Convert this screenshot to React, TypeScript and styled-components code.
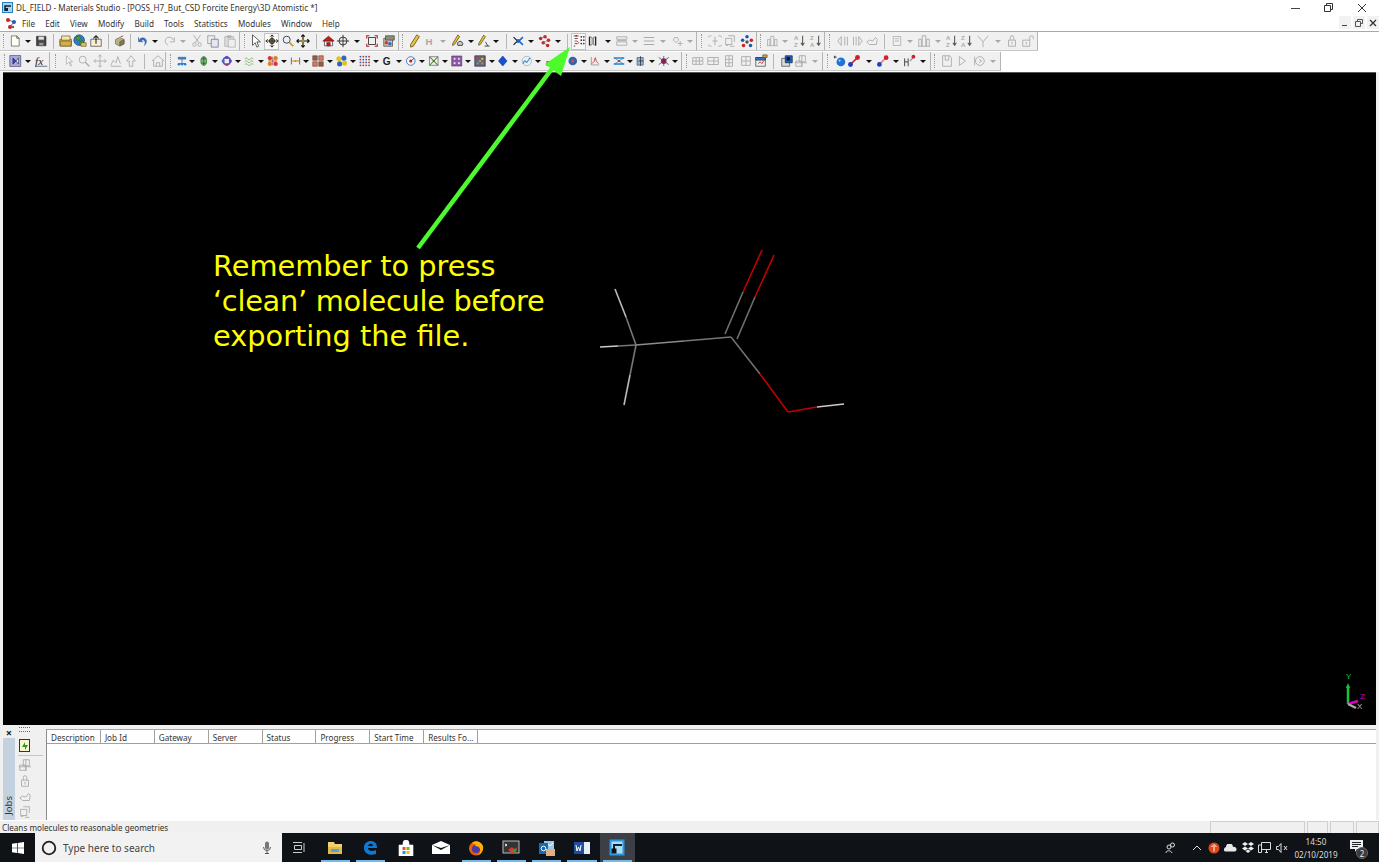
import React from "react";
import styled, { createGlobalStyle } from "styled-components";

const Global = createGlobalStyle`
  html, body { margin: 0; padding: 0; background: #f0f0f0; overflow: hidden; }
  #root { width: 1379px; height: 862px; }
  svg { display: block; }
`;
const UI = `"Noto Sans", "Open Sans", sans-serif`;

const Page = styled.div`
  position: relative; width: 1379px; height: 862px; display: flex; flex-direction: column;
  background: #f0f0f0; font-family: ${UI}; color: #222; overflow: hidden;
`;
const TitleBar = styled.div`
  height: 15px; flex: none; background: #fff; display: flex; align-items: center; padding-left: 2px; gap: 3px;
  font-size: 8.15px; white-space: nowrap; color: #333;
`;
const WinControls = styled.div`margin-left: auto; display: flex; padding-right: 1px;`;
const WinBtn = styled.div`width: 33px; height: 15px; display: flex; align-items: center; justify-content: center;`;
const MenuBar = styled.div`
  height: 16px; flex: none; background: #fff; display: flex; align-items: center; padding-left: 5px;
  font-size: 8.15px; color: #333; border-bottom: 1px solid #a9a9a9; box-sizing: content-box;
`;
const MenuLogo = styled.div`width: 14px; margin-right: 3px;`;
const MenuItem = styled.span`padding-right: 10.2px;`;
const MdiControls = styled.div`margin-left: auto; display: flex; gap: 2px; padding-right: 0; align-self: flex-start; margin-top: 1px;`;
const MdiBtn = styled.div`width: 12px; height: 13px; background: #f2f2f2; display: flex; align-items: center; justify-content: center;`;
const ToolRow = styled.div`height: 20px; flex: none; display: flex; background: #fff;`;
const Group = styled.div<{ $w: number }>`
  width: ${(p) => p.$w}px; flex: none; height: 19px; display: flex; align-items: center; background: #f0f0f0;
  border-right: 1px solid #b4b4b4; border-bottom: 1px solid #c8c8c8; box-sizing: border-box;
`;
const Slot = styled.div<{ $w: number; $active?: boolean }>`
  width: ${(p) => p.$w}px; flex: none; height: 17px; display: flex; align-items: center; justify-content: center;
  position: relative;
  ${(p) => (p.$active ? "&::before{content:'';position:absolute;top:0;bottom:0;left:50%;width:15px;margin-left:-8px;background:#f8f8f8;border:1px solid #c4c4c4;box-sizing:border-box;}" : "")}
  & > svg { position: relative; }
`;
const Grip = styled.div`width: 1px; height: 14px; border-left: 1px dotted #9a9a9a;`;
const Sep = styled.div`width: 1px; height: 15px; background: #b6b6b6;`;
const Caret = styled.div<{ $off?: boolean }>`
  width: 0; height: 0; border-left: 3px solid transparent; border-right: 3px solid transparent;
  border-top: 3px solid ${(p) => (p.$off ? "#a8a8a8" : "#111")};
`;
const Viewport = styled.div`
  position: relative; flex: none; height: 653px; margin: 0 3px; background: #000; border-top: 1px solid #555; box-sizing: border-box;
`;
const Scene = styled.svg`position: absolute; left: 0; top: 0;`;
const Note = styled.div`
  position: absolute; left: 210px; top: 176px; width: 380px; color: #ffff00;
  font: 28.8px/35px "DejaVu Sans", Verdana, sans-serif;
`;
const Tight = styled.span`letter-spacing: -0.28px;`;
const Pointer = styled.svg`position: absolute; left: 0; top: 0; pointer-events: none;`;
const JobsPanel = styled.div`flex: none; height: 95px; display: flex; padding: 0 3px 0 0;`;
const JobsTab = styled.div`width: 12px; flex: none; display: flex; flex-direction: column; align-items: center; margin-left: 3px;`;
const Close = styled.div`height: 13px; font-size: 11px; line-height: 15px; font-weight: 700; color: #222;`;
const TabBlue = styled.div`
  flex: 1; width: 12px; background: #c4d2e0; display: flex; align-items: flex-end; justify-content: center;
  font-size: 9.5px; color: #333;
`;
const TabLabel = styled.span`writing-mode: vertical-rl; transform: rotate(180deg); padding-top: 5px; line-height: 12px;`;
const JobTools = styled.div`width: 25px; margin-left: 3px; margin-right: 3px; flex: none; display: flex; flex-direction: column; align-items: flex-start; padding-top: 2px;`;
const JobGrip = styled.div`width: 11px; height: 3px; margin: 0 0 6px 1px; border-top: 1px dotted #667; border-bottom: 1px dotted #667;`;
const JobRule = styled.div`width: 25px; height: 1px; background: #c4c4c4; margin: 1px 0 2px;`;
const JobIcon = styled.div`height: 16px; display: flex; align-items: center;`;
const JobsTable = styled.div`flex: 1; margin-top: 4px; background: #fff; border-left: 1px solid #8c8c8c; border-top: 1px solid #a6a6a6; display: flex; flex-direction: column;`;
const HeadRow = styled.div`height: 14px; box-sizing: border-box; display: flex; border-bottom: 1px solid #a0a0a0; background: #fff; flex: none;`;
const HeadCell = styled.div`
  width: 53.9px; box-sizing: border-box; flex: none; border-right: 1px solid #a0a0a0; font-size: 8.15px; line-height: 15px;
  padding-left: 4px; color: #333; white-space: nowrap; overflow: hidden;
`;
const StatusBar = styled.div`flex: none; height: 13px; display: flex; font-size: 8.15px; line-height: 13px; padding-left: 2px; color: #333; border-top: 1px solid #fff; box-sizing: border-box;`;
const StatusText = styled.div`flex: 1; white-space: nowrap;`;
const StatusPane = styled.div<{ $w: number }>`width: ${(p) => p.$w}px; flex: none; margin-left: 2px; border: 1px solid #cfcfcf; border-bottom: 0; box-sizing: border-box;`;
const Taskbar = styled.div`flex: none; height: 29px; background: #0f1216; display: flex; align-items: stretch; color: #e8e8e8;`;
const Start = styled.div`width: 35px; flex: none; display: flex; align-items: center; justify-content: center;`;
const Search = styled.div`
  width: 247px; flex: none; background: #f2f2f2; display: flex; align-items: center; padding: 0 11px 0 6px; box-sizing: border-box;
  color: #444; font-size: 10px;
`;
const SearchText = styled.span`margin-left: 6px; flex: 1;`;
const TaskView = styled.div`width: 32px; flex: none; display: flex; align-items: center; justify-content: center;`;
const Apps = styled.div`display: flex; margin-left: 3.5px;`;
const AppTile = styled.div<{ $on?: boolean; $run?: boolean }>`
  width: 35.25px; flex: none; display: flex; align-items: center; justify-content: center; position: relative;
  background: ${(p) => (p.$on ? "#3c4046" : "transparent")};
  ${(p) => (p.$run ? "&::after{content:'';position:absolute;left:3px;right:3px;bottom:0;height:2px;background:#76b9ed;}" : "")}
`;
const Tray = styled.div`margin-left: auto; display: flex; align-items: center;`;
const TrayIcon = styled.div<{ $gap?: number }>`
  width: 17px; flex: none; display: flex; align-items: center; justify-content: center; margin-right: ${(p) => p.$gap ?? 0}px;
`;
const Clock = styled.div`width: 52px; text-align: center; font-size: 8.15px; line-height: 13px; color: #ddd;`;
const Notify = styled.div`width: 37px; align-self: stretch; box-sizing: border-box; padding: 0 9px 3px 0; position: relative; display: flex; justify-content: center; align-items: center;`;
const Badge = styled.div`
  position: absolute; left: 14px; top: 14px; width: 12px; height: 12px; border-radius: 50%; background: #3a3a3a; color: #eee;
  font-size: 8px; line-height: 11px; text-align: center; border: 1px solid #666; box-sizing: border-box;
`;

const G = "#a9a9a9";
const D = "#333";
const ln = (d: string, c = G, w = 1) => <path d={d} fill="none" stroke={c} strokeWidth={w} />;
const fl = (d: string, c: string, s = D) => <path d={d} fill={c} stroke={s} strokeWidth={0.8} />;
const dot = (x: number, y: number, c: string, r = 2) => <circle cx={x} cy={y} r={r} fill={c} />;
const txt = (x: number, y: number, s: string, c = G, size = 8) => (
  <text x={x} y={y} fontSize={size} fill={c} fontFamily="Liberation Sans, sans-serif" fontWeight={600}>{s}</text>
);

const ICONS: Record<string, React.ReactNode> = {
  new: <>{fl("M3 1.5h7l3 3v10H3z", "#fffff2", "#444")}{ln("M10 1.5v3h3", "#444")}</>,
  save: <>{fl("M2 2h12v12H2z", "#444", "#222")}{fl("M4.500 2.500h7v4h-7z", "#e8e8e8", "#888")}{fl("M5 10h6v4H5z", "#999", "#555")}</>,
  open: <>{fl("M1 6h14v8H1z", "#e6c66a", "#6b5a20")}{fl("M3 2h10v5H3z", "#f6e7a8", "#6b5a20")}{fl("M1 8h14l-1 6H2z", "#d4ad44", "#6b5a20")}</>,
  globe: <><circle cx="7" cy="7" r="6" fill="#2f7fc4" stroke="#1d4f80" />{fl("M3 4l4-2 2 3-3 3z", "#4d9a3a", "#2f6a24")}{fl("M8 8l4 0-1 4-3 0z", "#4d9a3a", "#2f6a24")}{fl("M9 10h6v4H9z", "#e3c45e", "#6b5a20")}</>,
  imp: <>{fl("M2 6h12v8H2z", "#f5efcf", "#444")}{ln("M8 11V2M5 5l3-3 3 3", "#222", 1.2)}</>,
  box: <>{fl("M2 6l6-3 6 3v6l-6 3-6-3z", "#b7b47e", "#555")}{fl("M8 9l6-3v6l-6 3z", "#7d7b4e", "#555")}{ln("M9 2l4-1", "#c33", 1.2)}</>,
  undo: <><path d="M3 7a5 5 0 0 1 9-1c1 2 1 5-2 8 1-3 1-5 0-6-1-2-3-2-4-1l2 2H2V3z" fill="#2f6fc2" stroke="#1c4a86" strokeWidth=".5" /></>,
  redo: <>{ln("M13 7a5 5 0 0 0-9-1c-1 2 0 5 3 7M9 9h5V4")}</>,
  cut: <>{ln("M4 1l6 9M12 1L6 10")}<circle cx="5" cy="12" r="2" fill="none" stroke={G} /><circle cx="11" cy="12" r="2" fill="none" stroke={G} /></>,
  copy: <>{fl("M2 2h8v9H2z", "#eee", "#888")}{fl("M6 6h8v9H6z", "#e4e8f2", "#667")}</>,
  paste: <>{fl("M2 3h10v11H2z", "#ddd", G)}{fl("M6 6h8v9H6z", "#eee", G)}{ln("M5 2h4v2H5z")}</>,
  cursor: <>{fl("M4 1v12l3-3 2 5 2-1-2-5h4z", "#fff", "#222")}</>,
  cursorD: <>{fl("M5 2v10l3-3 2 5 1-1-2-4h3z", "#f4f4f4", G)}</>,
  rotate: <><circle cx="8" cy="8" r="3" fill="#b08a2a" stroke="#222" />{ln("M8 1v14M1 8h14", "#222")}{ln("M6 3l2-2 2 2M6 13l2 2 2-2M3 6L1 8l2 2M13 6l2 2-2 2", "#222")}</>,
  zoom: <><circle cx="6.500" cy="6.500" r="4" fill="#eef" stroke="#333" />{ln("M9.500 9.500l4.500 4.500", "#c49a2a", 2)}</>,
  zoomD: <><circle cx="6.500" cy="6.500" r="4" fill="none" stroke={G} />{ln("M9.500 9.500l4.500 4.500", G, 1.5)}</>,
  pan: <>{ln("M8 1v14M1 8h14M6 3l2-2 2 2M6 13l2 2 2-2M3 6L1 8l2 2M13 6l2 2-2 2", "#111", 1.3)}{dot(8, 8, "#b08a2a", 2)}</>,
  panD: <>{ln("M8 1v14M1 8h14M6 3l2-2 2 2M6 13l2 2 2-2M3 6L1 8l2 2M13 6l2 2-2 2")}</>,
  home: <>{fl("M3 8h10v6H3z", "#eee", "#333")}{fl("M1 8l7-6 7 6z", "#b81f1f", "#7a1010")}{fl("M6 10h4v4H6z", "#b81f1f", "#7a1010")}</>,
  homeD: <>{ln("M1 8l7-6 7 6M3 7v7h10V7M6 14v-4h4v4")}</>,
  center: <><circle cx="8" cy="8" r="4.500" fill="none" stroke="#222" />{ln("M8 1v14M1 8h14", "#222")}</>,
  fit: <>{ln("M2 5V2h3M11 2h3v3M14 11v3h-3M5 14H2v-3", "#b02020", 1.3)}{ln("M4 4h8v8H4z", "#333")}</>,
  display: <>{fl("M2 5h10v9H2z", "#c9c6b2", "#444")}{fl("M4 2h10v5H4z", "#8f8c78", "#444")}{dot(5, 10, "#d33")}{dot(9, 11, "#36c")}</>,
  pencil: <>{fl("M10 1l3 2-7 11-3 1 0-3z", "#e9c33a", "#4a3a10")}</>,
  H: <>{txt(4, 12, "H", G, 11)}</>,
  pen2: <>{fl("M9 1l2 2-6 9-2 1 0-2z", "#e9c33a", "#4a3a10")}<path d="M9 13a3 3 0 1 1 5 0z" fill="#ccc" stroke="#333" /></>,
  pen3: <>{fl("M8 1l2 2-6 9-2 1 0-2z", "#e9c33a", "#4a3a10")}{ln("M9 14h6M10 9l3 5", "#333")}</>,
  cross: <>{ln("M2 3l5 5-5 5", "#222", 1.5)}{ln("M14 3L9 8l5 5", "#1c63c7", 2)}{dot(8, 8, "#1c63c7", 2.5)}</>,
  reddots: <>{dot(3, 5, "#c22")}{dot(8, 3, "#c22")}{dot(12, 7, "#c22")}{dot(6, 10, "#c22")}{dot(11, 13, "#c22")}{ln("M3 5l5-2 4 4-6 3 5 3", "#666", .7)}</>,
  clean: <>{ln("M2 2h6M3 5h4M2 14h2M3 11h3", "#444")}{dot(11, 3, "#333", 1)}{dot(14, 3, "#333", 1)}{dot(11, 7, "#333", 1)}{dot(14, 7, "#333", 1)}{dot(11, 11, "#333", 1)}{dot(14, 11, "#333", 1)}{ln("M3 8l3 0 2 2-2 2", "#c22")}{dot(5, 2, "#c22", 1)}</>,
  bond: <>{ln("M4 3v10M11 3v10", "#222", 1.5)}{ln("M4 3l3 1v8l-3 1M11 3L8.500 4v8l2.500 1", "#555", .8)}</>,
  dis1: <>{ln("M2 3h12v3H2zM2 9h12v4H2zM2 7.500h12")}</>,
  dis2: <>{ln("M2 4h12M2 8h12M2 12h12", G, 1.4)}</>,
  dis3: <>{ln("M5 4h4l1 3-3 3-3-3z")}{ln("M12 8v6M9 11h6")}</>,
  tor1: <>{ln("M4 2a6 6 0 0 0 0 12M12 2a6 6 0 0 1 0 12M8 3v10M5 8h6")}</>,
  tor2: <>{ln("M3 5h7v7H3zM6 2h7v7M3 13h3M8 14h5")}</>,
  tor3: <>{dot(8, 3, "#1f55b0")}{dot(3, 7, "#1f55b0")}{dot(13, 7, "#c22")}{dot(4, 13, "#c22")}{dot(12, 13, "#1f55b0")}{dot(8, 9, "#555")}</>,
  colsD: <>{ln("M2 14V6h3v8M6 14V2h4v12M11 14V6h3v8M1 14h14")}</>,
  az: <>{txt(1, 7, "A", G, 7)}{txt(1, 15, "Z", G, 7)}{ln("M11 2v11M9 10l2 3 2-3", "#555", 1.2)}</>,
  za: <>{txt(1, 7, "Z", G, 7)}{txt(1, 15, "A", G, 7)}{ln("M11 2v11M9 10l2 3 2-3", "#555", 1.2)}</>,
  tril: <>{ln("M6 3L2 8l4 5zM10 3v10M13 3v10")}</>,
  trir: <>{ln("M10 3l4 5-4 5zM7 3v10M4 3v10")}</>,
  hand: <>{ln("M2 9l3-2 4 1 3-4 2 2-1 6H5z")}</>,
  sheet: <>{ln("M3 2h10v12H3zM5 5h6M5 8h6")}</>,
  fork: <>{ln("M2 2l6 7 6-7M8 9v6")}</>,
  lock: <>{ln("M4 7h8v7H4zM6 7V4a2 2 0 0 1 4 0v3M8 9v3")}</>,
  unlock: <>{ln("M2 7h8v7H2zM10 7V4a2 2 0 0 1 4 0v2M6 9v3")}</>,
  film: <>{fl("M1 1h14v14H1z", "#a8abe0", "#445")}{fl("M5 4l4 4-4 4z", "#3f3fd0", "#224")}{fl("M12 4L9 8l3 4z", "#fff", "#224")}</>,
  fx: <><text x="0" y="12" fontSize="13" fill="#222" fontStyle="italic" fontFamily="Liberation Serif, serif">fx</text>{ln("M1 14h13", "#222", .7)}</>,
  graph: <>{ln("M2 13l3-6 3 3 2-7 3 8", G)}{ln("M2 14h12")}</>,
  ball: <>{ln("M8 2L3 8h3v6h4V8h3z")}</>,
  t1: <>{fl("M2 2h12v3H2z", "#3a8ad0", "#1a4a88")}{ln("M8 5v6M3 12h10", "#2a66b8", 1.3)}{dot(3, 13, "#2a7ad0", 2)}{dot(8, 13, "#2a7ad0", 2)}{dot(13, 13, "#2a7ad0", 2)}</>,
  t2: <><ellipse cx="8" cy="8" rx="4" ry="6" fill="#7cc06a" stroke="#2a6a20" />{ln("M8 2v12M5 5h6M5 11h6", "#245")}</>,
  t3: <><circle cx="8" cy="8" r="5" fill="none" stroke="#5a49c0" strokeWidth="2.500" />{dot(8, 3, "#5a49c0", 2.2)}{dot(3, 8, "#3a70c4", 2.2)}{dot(13, 8, "#5a49c0", 2.2)}{dot(8, 13, "#c33", 2)}</>,
  t4: <>{ln("M1 5q2-3 4 0t4 0 4 0M1 9q2-3 4 0t4 0 4 0M1 13q2-3 4 0t4 0 4 0", "#6cb35a", 1.1)}</>,
  t5: <>{dot(4, 4, "#d33", 3)}{dot(12, 4, "#d8851a", 3)}{dot(4, 12, "#d8851a", 3)}{dot(12, 12, "#d33", 3)}{ln("M8 2v12M2 8h12", "#a33", 1)}</>,
  t6: <>{ln("M3 8h10", "#d8851a", 1.5)}{ln("M2 3v10M14 3v10", "#2a66b8", 1.3)}{dot(8, 8, "#d8851a", 1.5)}</>,
  t7: <>{fl("M1 1h6v6H1z", "#9c5a48", "#643")}{fl("M9 9h6v6H9z", "#9c5a48", "#643")}{fl("M9 1h6v6H9z", "#d77a60", "#643")}{fl("M1 9h6v6H1z", "#d77a60", "#643")}</>,
  t8: <>{dot(4, 5, "#e5c21a", 3.5)}{dot(11, 4, "#2a66c8", 3.5)}{dot(5, 12, "#2a66c8", 3.5)}{dot(12, 11, "#e5c21a", 3.5)}</>,
  t9: <>{[2, 6, 10, 14].flatMap((x) => [2, 6, 10, 14].map((y) => <circle key={x + "-" + y} cx={x} cy={y} r="1.300" fill={(x + y) % 8 === 0 ? "#c33" : "#2a66b8"} />))}</>,
  G: <>{txt(1, 13, "G", "#222", 14)}</>,
  t11: <><circle cx="8" cy="8" r="6" fill="#f4f4f4" stroke="#3a70c4" strokeWidth="1.200" />{dot(8, 8, "#c22", 2.2)}{ln("M8 8l5-4", "#333")}</>,
  t12: <>{ln("M2 2h12v12H2z", "#666")}{ln("M2 2l12 12M14 2L2 14", "#3a9a3a", 1.4)}{dot(8, 8, "#c33", 1.5)}</>,
  t13: <>{fl("M1 1h14v14H1z", "#8a5aa8", "#534")}{dot(5, 5, "#e8d8f0", 1.5)}{dot(11, 5, "#e8d8f0", 1.5)}{dot(5, 11, "#e8d8f0", 1.5)}{dot(11, 11, "#e8d8f0", 1.5)}</>,
  t14: <>{fl("M1 1h14v14H1z", "#667", "#223")}{dot(5, 4, "#d33", 1.5)}{dot(11, 5, "#ec4", 1.5)}{dot(5, 11, "#4ac", 1.5)}{dot(11, 11, "#d6a", 1.5)}{dot(8, 8, "#8c4", 1.5)}</>,
  t15: <>{fl("M8 1l6 7-6 7-6-7z", "#1b4fd0", "#123a9a")}</>,
  t16: <><circle cx="8" cy="8" r="6.500" fill="none" stroke="#7bb4dc" />{ln("M3 12c2-8 4-2 5-2s3-6 5-6", "#3a8ac4", 1.5)}</>,
  t17: <>{dot(5, 12, "#c22", 2.5)}{dot(11, 12, "#c22", 2.5)}{ln("M3 9h10", "#b03a20", 1.5)}</>,
  t18: <><circle cx="8" cy="8" r="6" fill="#2f67ac" />{dot(8, 8, "#e44", 2)}</>,
  t19: <>{ln("M2 2v12h12", "#777")}{ln("M3 12l3-3 2-6 2 6 3 3", "#c22", 1.2)}</>,
  t20: <>{ln("M1 4h14M1 12h14", "#1c84c9", 1.8)}{ln("M2 4l12 8M14 4L2 12", "#1c84c9", 1)}{dot(8, 8, "#c22", 1.5)}</>,
  t21: <>{fl("M3 3h9v11H3z", "#8fb8e0", "#234")}{ln("M8 1v14M5 8h7", "#222")}</>,
  t22: <>{dot(8, 8, "#c2203a", 4)}{ln("M1 3l14 10M15 3L1 13M8 1v14", "#223a80", 1)}</>,
  grid: <>{ln("M2 4h12v8H2zM2 8h12M6 4v8M10 4v8")}</>,
  grid2: <>{ln("M2 4h12v8H2zM2 8h12M9 4v8")}</>,
  grid3: <>{ln("M4 2h8v12H4zM4 6h8M4 10h8M8 2v12")}</>,
  grid4: <>{ln("M3 3h10v10H3zM8 3v10M3 8h10")}</>,
  tbl: <>{fl("M2 4h11v10H2z", "#eee", "#444")}{fl("M2 4h11v3H2z", "#3a70c4", "#234")}{ln("M5 11l2-2 2 2 2-3", "#c22")}{fl("M10 1h5v3h-5z", "#c9a53a", "#654")}</>,
  sel: <>{fl("M2 5h9v9H2z", "#ddd", "#444")}{fl("M6 2h8v8H6z", "#1c63c7", "#123")}{fl("M8 4h3v3H8z", "#111", "#111")}</>,
  sel2: <>{ln("M6 2h7v7H6zM2 8h7v6H2zM9 1v14M1 10h14")}</>,
  ato: <>{ln("M2 2v3M1 3.500h3", "#222")}<circle cx="9" cy="9" r="5" fill="#1c74d8" />{dot(7.500, 7.500, "#9cd0ff", 1.3)}</>,
  bnd: <>{ln("M4 12l8-8", "#c22", 2)}{dot(4, 12, "#1c3ec7", 2.8)}{dot(12, 4, "#d21f2a", 2.8)}</>,
  bnd2: <>{ln("M4 12l8-8", "#d88", 2)}{dot(4, 12, "#1c3ec7", 2.8)}{dot(12, 4, "#d21f2a", 2.8)}</>,
  bnd3: <>{ln("M3 5v9M7 5v9M3 9h4", "#444", 1.1)}{ln("M9 8l4-4", "#999", 1.5)}{dot(13, 3, "#d21f2a", 2.2)}</>,
  ana1: <>{ln("M3 2h8l2 2v10H3zM6 2v5h4V2")}</>,
  play: <>{ln("M5 3l7 5-7 5z")}</>,
  stop: <>{ln("M3 3v10")}<circle cx="9" cy="8" r="5" fill="none" stroke={G} />{ln("M8 6l3 2-3 2")}</>,
  homeSpare: null,
};

type Item = [string, number];
type Grp = { s: number; e: number; items: Item[] };

const a = "arrow";
const o = "arrowD";
const row1: Grp[] = [
  { s: 0, e: 240, items: [["grip", 3], ["new", 14], [a, 28], ["save", 42], ["sep", 53], ["open", 64], ["globe", 80], ["imp", 97], ["sep", 108], ["box", 119], ["sep", 131], ["undo", 142], [a, 155], ["redo", 169], [o, 183], ["cut", 196], ["copy", 213], ["paste", 229]] },
  { s: 240, e: 399, items: [["grip", 243], ["cursor", 255], ["*rotate", 272], ["zoom", 288], ["pan", 304], ["sep", 317], ["home", 327], ["center", 343], [a, 357], ["fit", 371], ["display", 387]] },
  { s: 399, e: 697, items: [["grip", 402], ["pencil", 413], ["H", 430], [o, 443], ["pen2", 457], [a, 471], ["pen3", 483], [a, 498], ["sep", 506], ["cross", 517], [a, 531], ["reddots", 545], [a, 559], ["sep", 567], ["*clean", 577], ["bond", 594], [a, 608], ["dis1", 621], [o, 635], ["dis2", 649], [o, 663], ["dis3", 676], [o, 690]] },
  { s: 697, e: 757, items: [["grip", 701], ["tor1", 714], ["tor2", 730], ["tor3", 745]] },
  { s: 757, e: 825, items: [["grip", 760], ["colsD", 771], [o, 785], ["az", 799], ["za", 815]] },
  { s: 825, e: 1038, items: [["grip", 829], ["tril", 842], ["trir", 857], ["hand", 873], ["sep", 885], ["sheet", 896], [o, 909], ["colsD", 925], [o, 938], ["az", 951], ["za", 967], ["fork", 983], [o, 998], ["lock", 1011], ["unlock", 1027]] },
];
const row2: Grp[] = [
  { s: 0, e: 50, items: [["grip", 3], ["film", 15], [a, 28], ["fx", 42]] },
  { s: 50, e: 166, items: [["grip", 56], ["cursorD", 68], ["zoomD", 84], ["panD", 100], ["graph", 116], ["ball", 132], ["sep", 145], ["homeD", 156]] },
  { s: 166, e: 682, items: [["grip", 171], ["t1", 182], [a, 191], ["t2", 204], [a, 214], ["t3", 227], [a, 237], ["t4", 250], [a, 260], ["t5", 273], [a, 283], ["t6", 296], [a, 305], ["t7", 319], [a, 329], ["t8", 342], [a, 352], ["t9", 365], [a, 375], ["G", 388], [a, 398], ["t11", 412], [a, 421], ["t12", 435], [a, 444], ["t13", 458], [a, 467], ["t14", 481], [a, 491], ["t15", 503], [a, 514], ["t16", 527], [a, 537], ["t17", 550], [a, 561], ["t18", 573], [a, 584], ["t19", 596], [a, 605], ["t20", 620], [a, 629], ["t21", 641], [a, 651], ["t22", 664], [a, 674]] },
  { s: 682, e: 823, items: [["grip", 686], ["grid", 696], ["grid2", 713], ["grid3", 729], ["grid4", 746], ["tbl", 762], ["sep", 774], ["sel", 785], ["sel2", 802], [o, 815]] },
  { s: 823, e: 931, items: [["grip", 827], ["ato", 838], ["bnd", 855], [a, 869], ["bnd2", 882], [a, 896], ["bnd3", 908], [a, 924]] },
  { s: 931, e: 1001, items: [["grip", 934], ["ana1", 945], ["play", 962], ["stop", 980], [o, 993]] },
];

const Glyph = ({ k, size = 14 }: { k: string; size?: number }) => (
  <svg width={size} height={size} viewBox="0 0 16 16">{ICONS[k]}</svg>
);

const ToolGroup = ({ g }: { g: Grp }) => (
  <Group $w={g.e - g.s}>
    {g.items.map(([k, c], i) => {
      const left = i === 0 ? g.s : (g.items[i - 1][1] + c) / 2;
      const right = i === g.items.length - 1 ? g.e - 1 : (c + g.items[i + 1][1]) / 2;
      const w = right - left;
      const active = k.startsWith("*");
      const name = active ? k.slice(1) : k;
      return (
        <Slot key={i} $w={w} $active={active}>
          {name === "grip" ? <Grip /> : name === "sep" ? <Sep /> : name === a ? <Caret /> : name === o ? <Caret $off /> : <Glyph k={name} />}
        </Slot>
      );
    })}
  </Group>
);

const bonds: [number, number, number, number, string][] = [
  [636, 345, 626, 317, "#777"], [626, 317, 615, 289, "#bbb"],
  [636, 345, 618, 346, "#777"], [618, 346, 600, 347, "#ccc"],
  [636, 345, 630, 375, "#777"], [630, 375, 624, 405, "#bbb"],
  [636, 345, 684, 341, "#8c8c8c"], [684, 341, 731, 337, "#777"],
  [725, 334, 743, 292, "#707070"], [743, 292, 762, 250, "#c00000"],
  [737, 339, 755, 297, "#707070"], [755, 297, 774, 255, "#c00000"],
  [731, 337, 760, 374, "#707070"], [760, 374, 788, 412, "#c00000"],
  [788, 412, 817, 407, "#c00000"], [817, 407, 844, 404, "#ccc"],
];

const Molecule = () => (
  <Scene width="1373" height="652" viewBox="3 73 1373 652">
    {bonds.map(([x1, y1, x2, y2, c], i) => (
      <line key={i} x1={x1} y1={y1} x2={x2} y2={y2} stroke={c} strokeWidth="1.600" />
    ))}
    <path d="M1348 704V686" stroke="#16c43a" strokeWidth="2.500" />
    <path d="M1346 688l2-5 2 5z" fill="#16c43a" />
    <path d="M1348 704l10-3" stroke="#e000c8" strokeWidth="2.500" />
    <path d="M1348 704l8 4" stroke="#aaa" strokeWidth="2.500" />
    <text x="1346" y="679" fontSize="8" fill="#16c43a" fontFamily="Liberation Sans">Y</text>
    <text x="1360" y="699" fontSize="8" fill="#d000c0" fontFamily="Liberation Sans">Z</text>
    <text x="1357" y="709" fontSize="8" fill="#bbb" fontFamily="Liberation Sans">X</text>
  </Scene>
);

const cols = ["Description", "Job Id", "Gateway", "Server", "Status", "Progress", "Start Time", "Results Fo..."];

const WinLogo = () => (
  <svg width="12" height="12" viewBox="0 0 12 12"><path d="M0 1.700l5-.7v4.700H0zM5.700.9L12 0v5.700H5.700zM0 6.300h5V11l-5-.7zM5.700 6.300H12V12l-6.300-.9z" fill="#fff" /></svg>
);
const TI = ({ w = 16, h = 16, children }: { w?: number; h?: number; children: React.ReactNode }) => (
  <svg width={w} height={h} viewBox={`0 0 ${w} ${h}`}>{children}</svg>
);

export default function App() {
  return (
    <Page>
      <Global />
      <TitleBar>
        <svg width="11" height="11" viewBox="0 0 11 11"><rect width="11" height="11" fill="#2a7fc0" /><rect x="1" y="1" width="9" height="9" fill="#a8d4f0" /><path d="M3 9V4h6" fill="none" stroke="#123" strokeWidth="1.500" /><rect x="3" y="6" width="3" height="3" fill="#123" /></svg>
        <span>DL_FIELD - Materials Studio - [POSS_H7_But_CSD Forcite Energy\3D Atomistic *]</span>
        <WinControls>
          <WinBtn><svg width="10" height="10"><path d="M0 5.500h9" stroke="#444" /></svg></WinBtn>
          <WinBtn><svg width="10" height="10"><path d="M2.500 2.500v-2h6v6h-2M.5 2.500h6v6h-6z" fill="none" stroke="#333" /></svg></WinBtn>
          <WinBtn><svg width="10" height="10"><path d="M1 1l8 8M9 1l-8 8" stroke="#333" /></svg></WinBtn>
        </WinControls>
      </TitleBar>
      <MenuBar>
        <MenuLogo>
          <svg width="12" height="12" viewBox="0 0 12 12"><path d="M3 3l6 2-4 5" stroke="#666" fill="none" />{dot(3, 3, "#c22", 2)}{dot(9, 5, "#2a55c0", 2)}{dot(5, 10, "#c22", 2)}{dot(8, 10, "#666", 1.2)}</svg>
        </MenuLogo>
        {["File", "Edit", "View", "Modify", "Build", "Tools", "Statistics", "Modules", "Window", "Help"].map((m) => <MenuItem key={m}>{m}</MenuItem>)}
        <MdiControls>
          <MdiBtn><svg width="8" height="8"><path d="M1 6.500h5" stroke="#444" /></svg></MdiBtn>
          <MdiBtn><svg width="8" height="8"><path d="M2.500 2V.5h5v4H6M.5 2.500h5v5h-5z" fill="none" stroke="#555" /></svg></MdiBtn>
          <MdiBtn><svg width="8" height="8"><path d="M1 1l6 6M7 1L1 7" stroke="#333" strokeWidth="1.300" /></svg></MdiBtn>
        </MdiControls>
      </MenuBar>
      <ToolRow>{row1.map((g) => <ToolGroup key={g.s} g={g} />)}</ToolRow>
      <ToolRow>{row2.map((g) => <ToolGroup key={g.s} g={g} />)}</ToolRow>
      <Viewport>
        <Molecule />
        <Note>Remember to press<br /><Tight>‘clean’ molecule before</Tight><br />exporting the file.</Note>
      </Viewport>
      <JobsPanel>
        <JobsTab>
          <Close>×</Close>
          <TabBlue><TabLabel>Jobs</TabLabel></TabBlue>
        </JobsTab>
        <JobTools>
          <JobGrip />
          <JobIcon><svg width="14" height="15" viewBox="0 0 14 15"><rect x="1.500" y="1.500" width="10" height="12" fill="#fbf6cf" stroke="#333" /><path d="M4 9l3-5v3h3l-3 5V9z" fill="#2a9a2a" /></svg></JobIcon>
          <JobRule />
          <JobIcon><Glyph k="sel2" /></JobIcon>
          <JobIcon><Glyph k="lock" /></JobIcon>
          <JobIcon><Glyph k="hand" /></JobIcon>
          <JobIcon><Glyph k="tor2" /></JobIcon>
        </JobTools>
        <JobsTable>
          <HeadRow>{cols.map((c) => <HeadCell key={c}>{c}</HeadCell>)}</HeadRow>
        </JobsTable>
      </JobsPanel>
      <StatusBar>
        <StatusText>Cleans molecules to reasonable geometries</StatusText>
        <StatusPane $w={95} /><StatusPane $w={21} /><StatusPane $w={24} /><StatusPane $w={23} />
      </StatusBar>
      <Taskbar>
        <Start><WinLogo /></Start>
        <Search>
          <svg width="16" height="16"><circle cx="8" cy="8" r="6.300" fill="none" stroke="#222" strokeWidth="1.800" /></svg>
          <SearchText>Type here to search</SearchText>
          <svg width="8" height="13" viewBox="0 0 8 13"><rect x="2" y="0.500" width="4" height="8" rx="2" fill="#777" /><path d="M.5 6a3.500 3.500 0 0 0 7 0M4 10v2M2 12.500h4" stroke="#555" fill="none" /></svg>
        </Search>
        <TaskView><svg width="13" height="11"><path d="M1 .5h9M2.500 3.500h7v4h-7zM1 10.500h9M12 1v9" stroke="#ccc" fill="none" /></svg></TaskView>
        <Apps>
          <AppTile $run><TI h={14}><path d="M1 1h6l1 2h7v10H1z" fill="#f5cf6a" /><path d="M1 6h14v7H1z" fill="#e5b648" /><rect x="4" y="8" width="8" height="3" fill="#4aa6e0" /></TI></AppTile>
          <AppTile $run><TI><path d="M2 8c0-5 3-7 7-7 4 0 6 3 6 7H6c0 3 4 4 8 2v4c-6 2-12 0-12-6zM6 6h5c0-3-4-3-5 0z" fill="#0f78d4" /></TI></AppTile>
          <AppTile><TI><path d="M1 5h14v11H1zM5 5V3a3 3 0 0 1 6 0v2" fill="#fff" stroke="#fff" strokeWidth=".6" /><rect x="4.500" y="7" width="3" height="3" fill="#f25022" /><rect x="8.500" y="7" width="3" height="3" fill="#7fba00" /><rect x="4.500" y="11" width="3" height="3" fill="#00a4ef" /><rect x="8.500" y="11" width="3" height="3" fill="#ffb900" /></TI></AppTile>
          <AppTile><TI w={18} h={13}><path d="M0 4l9-4 9 4v9H0z" fill="#fff" /><path d="M0 4l9 5 9-5-9 3z" fill="#111" /></TI></AppTile>
          <AppTile $run><TI><circle cx="8" cy="8.500" r="7" fill="#e66000" /><circle cx="8" cy="9" r="4" fill="#4a3aa8" /><path d="M4 3c3-3 9-2 11 3 1 4-2 9-6 9 3-1 4-4 3-6-1-3-4-3-5-3 0-1 1-1 1-2-2 0-3 0-4-1z" fill="#ffb000" /></TI></AppTile>
          <AppTile $run><TI w={18} h={16}><rect x="1" y="1" width="16" height="12" fill="#333" stroke="#bbb" /><path d="M3 4l2 1-2 1" stroke="#fff" fill="none" /><path d="M6 10l4-3 3 3 3-4-3 7-2 1z" fill="#d33" /><path d="M10 11l3-3 2 2-3 3z" fill="#3a9a3a" /></TI></AppTile>
          <AppTile $run><TI w={18}><rect x="6" y="1" width="10" height="9" fill="#9cc8ec" /><rect x="1" y="3" width="9" height="11" fill="#0f6cbd" /><circle cx="5.500" cy="8.500" r="2.300" fill="none" stroke="#fff" /><path d="M8 9h9v7H8z" fill="#e0b080" /><path d="M10 4l2 2 3-3" stroke="#fff" fill="none" /></TI></AppTile>
          <AppTile $run><TI w={18}><rect x="7" y="2" width="10" height="12" fill="#e8edf7" /><rect x="1" y="2" width="10" height="12" fill="#1f4f9c" /><path d="M3 5l1 6 1.500-4 1.500 4 1-6" stroke="#fff" fill="none" /></TI></AppTile>
          <AppTile $on $run><TI h={17}><rect x="0.500" y="0.500" width="15" height="16" fill="#2a95e0" /><rect x="2.500" y="2.500" width="11" height="12" fill="#a8dcf8" /><path d="M5 14V6h8" fill="none" stroke="#123" strokeWidth="2" /><rect x="2.500" y="9.500" width="5" height="5" fill="#111" /></TI></AppTile>
        </Apps>
        <Tray>
          <TrayIcon $gap={9}><TI w={12} h={12}><circle cx="7.500" cy="3" r="2" fill="none" stroke="#ddd" /><circle cx="4" cy="5" r="2" fill="none" stroke="#ddd" /><path d="M1 11c0-3 5-3 6 0" fill="none" stroke="#ddd" /></TI></TrayIcon>
          <TrayIcon><TI w={10} h={6}><path d="M1 5l4-4 4 4" fill="none" stroke="#ddd" /></TI></TrayIcon>
          <TrayIcon><TI w={12} h={12}><circle cx="6" cy="6" r="5.500" fill="#e0471a" /><path d="M6 9.500V4M3.500 5L6 2.500 8.500 5" stroke="#fff" fill="none" /></TI></TrayIcon>
          <TrayIcon><TI w={13} h={8}><path d="M1 7.500a2.500 2.500 0 0 1 1-4.500 3.500 3.500 0 0 1 7 0 2.300 2.300 0 0 1 2 4.500z" fill="#e8e8e8" /></TI></TrayIcon>
          <TrayIcon><TI w={12} h={11}><path d="M3 0l3 2-3 2-3-2zM9 0l3 2-3 2-3-2zM3 4.500l3 2-3 2-3-2zM9 4.500l3 2-3 2-3-2zM3.500 9l2.500-1.500L8.500 9 6 11z" fill="#eee" /></TI></TrayIcon>
          <TrayIcon><TI w={13} h={11}><path d="M3.500.5h9v7h-9zM.5 3h3v7.500h-3zM7 10.500h3M8.500 8v2.500" fill="none" stroke="#ddd" /></TI></TrayIcon>
          <TrayIcon><TI w={12} h={10}><path d="M.5 3.500h2l2.500-3v9l-2.500-3h-2zM8 3l3 4M11 3L8 7" fill="none" stroke="#ddd" /></TI></TrayIcon>
          <Clock>14:50<br />02/10/2019</Clock>
          <Notify>
            <svg width="13" height="12" viewBox="0 0 13 12"><path d="M0 0h13v9H7l-2 3V9H0z" fill="#eee" /><path d="M2 2.500h9M2 4.500h9M2 6.500h6" stroke="#222" /></svg>
            <Badge>2</Badge>
          </Notify>
        </Tray>
      </Taskbar>
      <Pointer width="1379" height="862">
        <path d="M418 248L554 66" stroke="#4dfb2d" strokeWidth="4.500" />
        <path d="M570 47L545 64L561 76z" fill="#4dfb2d" />
      </Pointer>
    </Page>
  );
}
